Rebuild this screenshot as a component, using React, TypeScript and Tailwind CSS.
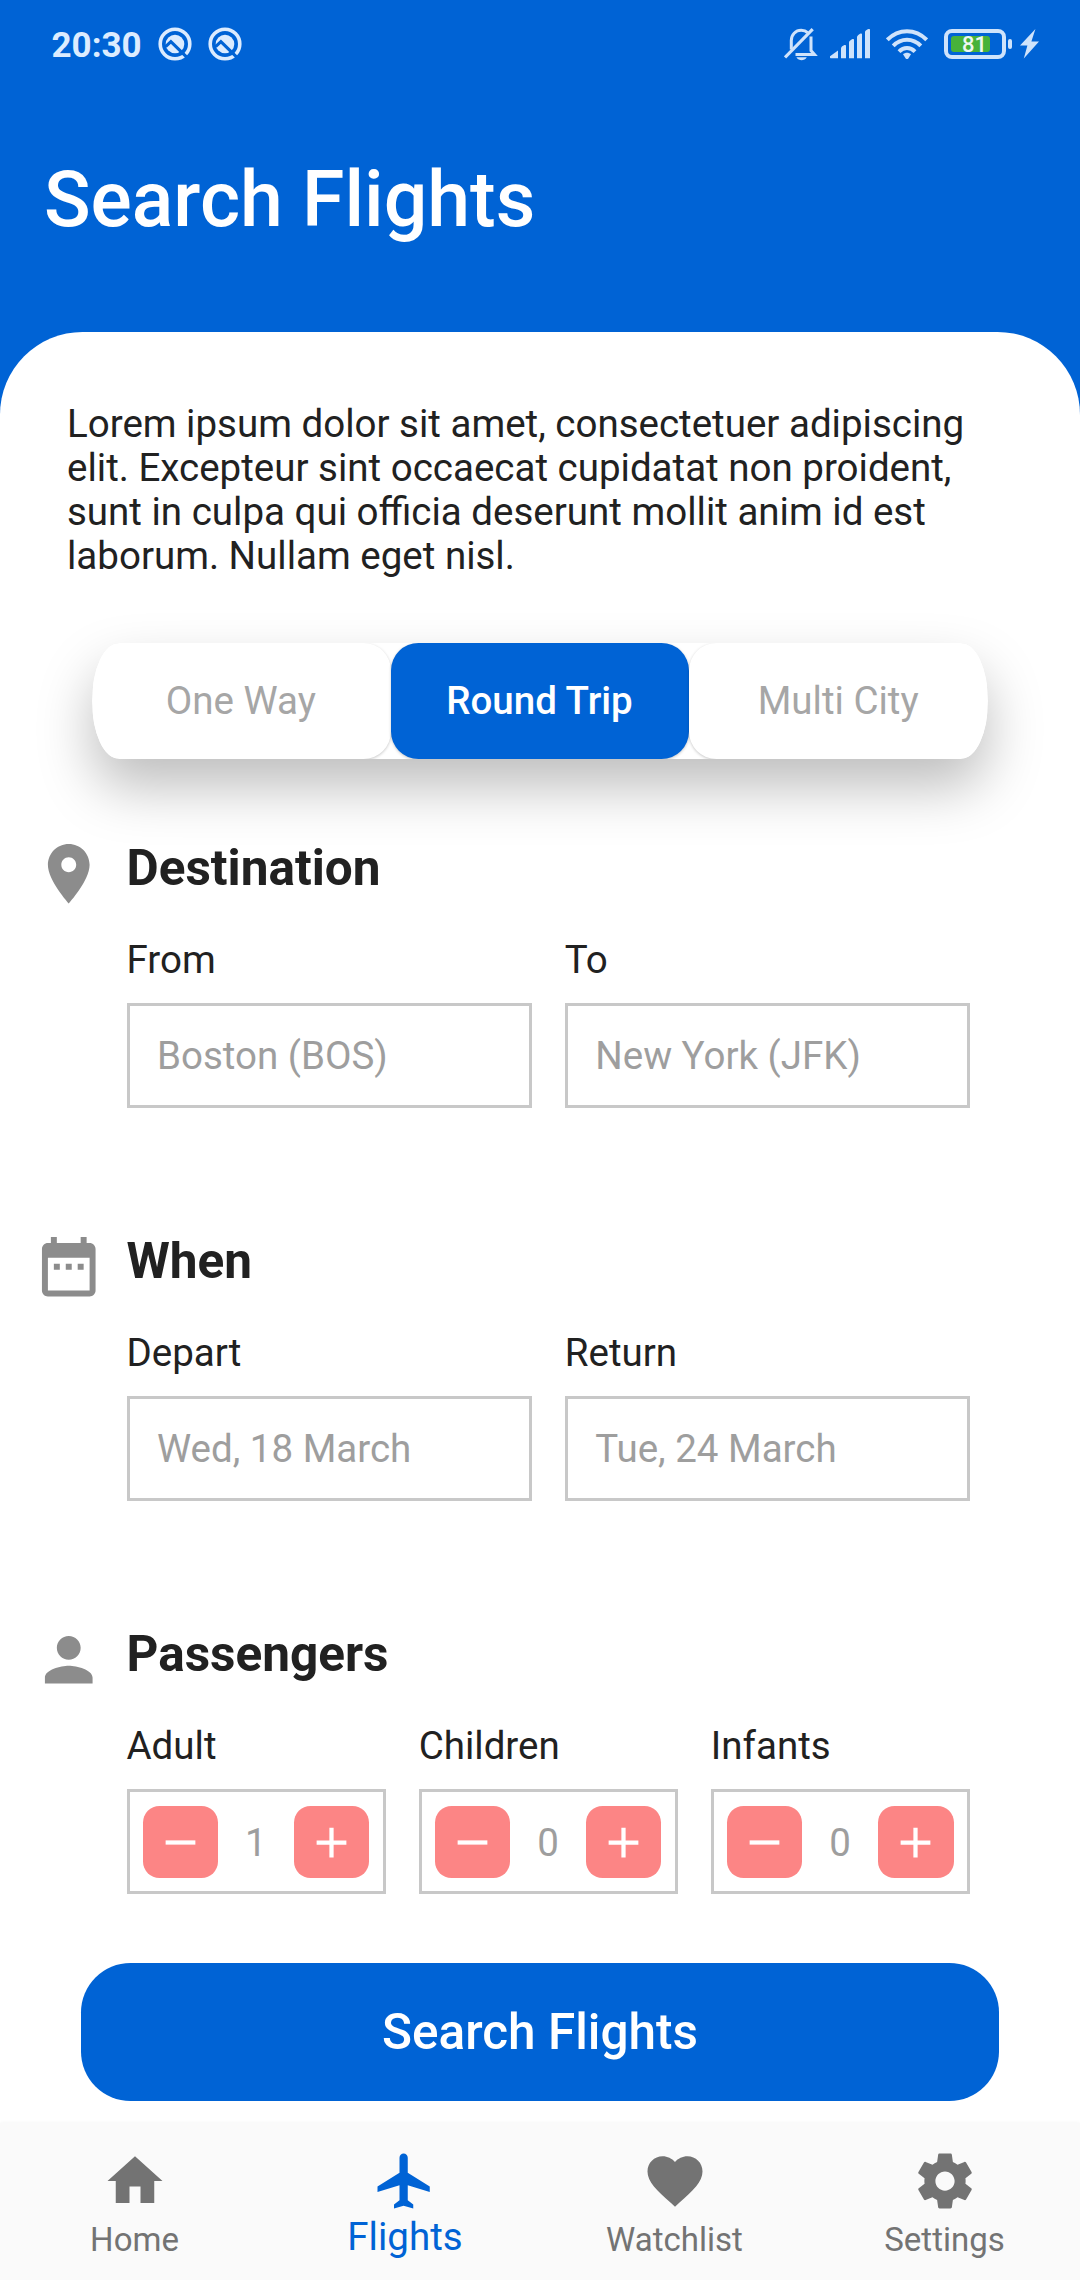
import type { ReactNode } from 'react';

const PATHS = {
  place:
    'M12 2C8.13 2 5 5.13 5 9c0 5.25 7 13 7 13s7-7.75 7-13c0-3.87-3.13-7-7-7zm0 9.5c-1.38 0-2.5-1.12-2.5-2.5s1.12-2.5 2.5-2.5 2.5 1.12 2.5 2.5-1.12 2.5-2.5 2.5z',
  dateRange:
    'M9 11H7v2h2v-2zm4 0h-2v2h2v-2zm4 0h-2v2h2v-2zm2-7h-1V2h-2v2H8V2H6v2H5c-1.11 0-1.99.9-1.99 2L3 20c0 1.1.89 2 2 2h14c1.1 0 2-.9 2-2V6c0-1.1-.9-2-2-2zm0 16H5V9h14v11z',
  person:
    'M12 12c2.21 0 4-1.79 4-4s-1.79-4-4-4-4 1.79-4 4 1.79 4 4 4zm0 2c-2.67 0-8 1.34-8 4v2h16v-2c0-2.66-5.33-4-8-4z',
  home: 'M10 20v-6h4v6h5v-8h3L12 3 2 12h3v8z',
  plane:
    'M21 16v-2l-8-5V3.5c0-.83-.67-1.5-1.5-1.5S10 2.67 10 3.5V9l-8 5v2l8-2.5V19l-2 1.5V22l3.5-1 3.5 1v-1.5L13 19v-5.5l8 2.5z',
  heart:
    'M12 21.35l-1.45-1.32C5.4 15.36 2 12.28 2 8.5 2 5.42 4.42 3 7.5 3c1.74 0 3.41.81 4.5 2.09C13.09 3.81 14.76 3 16.5 3 19.58 3 22 5.42 22 8.5c0 3.78-3.4 6.86-8.55 11.54L12 21.35z',
  settings:
    'M19.43 12.98c.04-.32.07-.64.07-.98s-.03-.66-.07-.98l2.11-1.65c.19-.15.24-.42.12-.64l-2-3.46c-.12-.22-.39-.3-.61-.22l-2.49 1c-.52-.4-1.08-.73-1.69-.98l-.38-2.65C14.46 2.18 14.25 2 14 2h-4c-.25 0-.46.18-.49.42l-.38 2.65c-.61.25-1.17.59-1.69.98l-2.49-1c-.23-.09-.49 0-.61.22l-2 3.46c-.13.22-.07.49.12.64l2.11 1.65c-.04.32-.07.65-.07.98s.03.66.07.98l-2.11 1.65c-.19.15-.24.42-.12.64l2 3.46c.12.22.39.3.61.22l2.49-1c.52.4 1.08.73 1.69.98l.38 2.65c.03.24.24.42.49.42h4c.25 0 .46-.18.49-.42l.38-2.65c.61-.25 1.17-.59 1.69-.98l2.49 1c.23.09.49 0 .61-.22l2-3.46c.12-.22.07-.49-.12-.64l-2.11-1.65zM12 15.5c-1.93 0-3.5-1.57-3.5-3.5s1.57-3.5 3.5-3.5 3.5 1.57 3.5 3.5-1.57 3.5-3.5 3.5z',
  minus: 'M19 13H5v-2h14v2z',
  plus: 'M19 13h-6v6h-2v-6H5v-2h6V5h2v6h6v2z',
};

function Icon({ name, className }: { name: keyof typeof PATHS; className: string }) {
  return (
    <svg viewBox="0 0 24 24" fill="currentColor" className={`shrink-0 ${className}`}>
      <path d={PATHS[name]} />
    </svg>
  );
}

function QuickIcon() {
  return (
    <svg viewBox="0 0 34 34" className="h-[34px] w-[34px]" fill="none">
      <circle cx="17" cy="17" r="14.8" stroke="currentColor" strokeWidth="3.6" />
      <circle cx="17" cy="17" r="9.3" fill="currentColor" />
      <path d="M7.6 19.6L12.9 14.6L30 31.4" stroke="#0063d5" strokeWidth="3.2" />
    </svg>
  );
}

function StatusBar() {
  return (
    <div className="flex h-[88px] items-center justify-between pl-[51.5px] pr-[41px] text-[#dcecff]">
      <div className="flex items-center">
        <span className="w-[106px] pt-[3px] text-[35px] font-bold leading-[40px]">20:30</span>
        <div className="flex gap-4">
          <QuickIcon />
          <QuickIcon />
        </div>
      </div>
      <div className="flex items-center text-[#cfe3fb]">
        {/* muted bell */}
        <svg viewBox="0 0 34 34" className="mr-[12px] h-[34px] w-[34px]" fill="none" stroke="currentColor" strokeWidth="3">
          <path d="M7.3 22.5V13.5C7.3 7.6 11.6 3.3 17.2 3.3C20 3.3 22 4 23.6 5.6" />
          <path d="M27 9.5V23.6L30.5 27.6H11.5" />
          <path d="M1 30.5L28.7 2.2" strokeWidth="3.2" />
          <path d="M12.4 30.2H22.8C21.5 32.5 19.5 33.2 17.6 33.2S13.7 32.5 12.4 30.2Z" fill="currentColor" stroke="none" />
        </svg>
        {/* signal */}
        <svg viewBox="0 0 40 30" className="mr-[16px] h-[30px] w-[40px]" fill="currentColor">
          <path d="M0 27.3L8 21.6V29.3H1C.4 29.3 0 28.8 0 28.2Z" />
          <path d="M11 19.2C11 17.4 16 14.6 16 16.8V29.3H11Z" />
          <path d="M19 13.4C19 11.6 24 8.6 24 10.8V29.3H19Z" />
          <path d="M27 8C27 6.2 32 3 32 5.2V29.3H27Z" />
          <path d="M35 3C35 1.2 40-1.6 40 1V29.3H35Z" />
        </svg>
        {/* wifi */}
        <svg viewBox="0 0 42 30" className="mr-[16px] h-[30px] w-[42px]" fill="none" stroke="currentColor" strokeWidth="4">
          <path d="M1.3 10.8C12.6-.7 29.4-.7 40.7 10.8" />
          <path d="M7.2 16.8C15.2 8.6 26.8 8.6 34.8 16.8" />
          <path d="M13 22.6C17.8 17.8 24.2 17.8 29 22.6" />
          <path d="M17 25.2C19.4 23.2 22.6 23.2 25 25.2L22.3 29.4C21.6 30.2 20.4 30.2 19.7 29.4Z" fill="currentColor" stroke="none" />
        </svg>
        {/* battery */}
        <div className="flex items-center">
          <div className="relative flex h-[30px] w-[62px] items-center rounded-[8px] border-4 border-current pl-[3px]">
            <div className="h-4 w-[39px] rounded-[3px] bg-[#47b23a]" />
            <span className="absolute left-[14px] top-[-1px] text-[22px] font-medium leading-[26px] text-[#eef7f2]">81</span>
          </div>
          <div className="ml-[2px] h-[10px] w-[4px] rounded-[2px] bg-current" />
        </div>
        <svg viewBox="0 0 19 30" className="ml-[8px] h-[30px] w-[19px]" fill="currentColor">
          <path d="M15.4 0L0 16.4H7.4L3.8 29.6L19 12.4H11.4Z" />
        </svg>
      </div>
    </div>
  );
}

function Segment({ label, active }: { label: string; active?: boolean }) {
  return (
    <button
      className={`flex flex-1 items-center justify-center rounded-[27.5px] pb-[2px] pr-px text-[38.5px] leading-[45px] shadow-[0_1px_3px_rgba(0,0,0,0.22)] ${
        active ? 'bg-[#0063d5] font-medium text-white' : 'bg-white text-[#a6a6a6]'
      }`}
    >
      {label}
    </button>
  );
}

function Section({ icon, title, children }: { icon: keyof typeof PATHS; title: string; children: ReactNode }) {
  return (
    <section className="flex gap-[22px]">
      <Icon name={icon} className="h-[71.5px] w-[71.5px] text-[#8c8c8c]" />
      <div className="w-[843.5px] pt-px">
        <h2 className="text-[49.5px] font-bold leading-[58px]">{title}</h2>
        <div className="mt-10 flex gap-[33px]">{children}</div>
      </div>
    </section>
  );
}

function Field({ label, value }: { label: string; value: string }) {
  return (
    <div className="flex-1">
      <div className="text-[38.5px] leading-[45px]">{label}</div>
      <div className="mt-[21px] flex h-[104.5px] items-center border-[3px] border-[#c8c8c8] pl-[27.5px] text-[38.5px] leading-[45px] text-[#9e9e9e]">
        {value}
      </div>
    </div>
  );
}

function Counter({ label, value }: { label: string; value: number }) {
  return (
    <div className="flex-1">
      <div className="text-[38.5px] leading-[45px]">{label}</div>
      <div className="mt-[21px] flex h-[104.5px] items-center justify-between border-[3px] border-[#c8c8c8] pl-[13px] pr-[13.5px] pt-[2px]">
        <button className="flex h-[72px] w-[75.5px] items-center justify-center rounded-[16.5px] bg-[#fc8585] text-white">
          <Icon name="minus" className="h-[51px] w-[51px]" />
        </button>
        <span className="text-[38.5px] leading-[45px] text-[#9e9e9e]">{value}</span>
        <button className="flex h-[72px] w-[75.5px] items-center justify-center rounded-[16.5px] bg-[#fc8585] text-white">
          <Icon name="plus" className="h-[51px] w-[51px]" />
        </button>
      </div>
    </div>
  );
}

function NavItem({ icon, label, active }: { icon: keyof typeof PATHS; label: string; active?: boolean }) {
  return (
    <a className={`flex flex-1 flex-col items-center pt-[25px] ${active ? 'text-[#0063d5]' : 'text-[#737373]'}`}>
      <Icon name={icon} className="h-[66px] w-[66px]" />
      <span className={active ? 'text-[38.5px] leading-[45px]' : 'pr-px pt-[6px] text-[33px] leading-[39px]'}>{label}</span>
    </a>
  );
}

export default function App() {
  return (
    <div className="flex h-[2280px] w-[1080px] flex-col overflow-hidden bg-[#0063d5] font-['Roboto',sans-serif] text-[#212121]">
      <header className="h-[332px] shrink-0">
        <StatusBar />
        <h1 className="pl-11 pt-[67px] text-[77px] font-medium leading-[90px] text-white">Search Flights</h1>
      </header>

      <main className="flex min-h-0 flex-1 flex-col rounded-t-[82.5px] bg-white pt-[70px]">
        <p className="whitespace-nowrap pl-[67px] text-[38.5px] leading-[44px]">
          Lorem ipsum dolor sit amet, consectetuer adipiscing
          <br />
          elit. Excepteur sint occaecat cupidatat non proident,
          <br />
          sunt in culpa qui officia deserunt mollit anim id est
          <br />
          laborum. Nullam eget nisl.
        </p>

        <div className="mx-[92px] mt-[65px] flex h-[116px] shrink-0 overflow-hidden rounded-[27px/58px] bg-white shadow-[0_28px_55px_rgba(0,0,0,0.26)]">
          <Segment label="One Way" />
          <Segment label="Round Trip" active />
          <Segment label="Multi City" />
        </div>

        <div className="mt-[79px] flex flex-col gap-[123.5px] pl-[33px]">
          <Section icon="place" title="Destination">
            <Field label="From" value="Boston (BOS)" />
            <Field label="To" value="New York (JFK)" />
          </Section>
          <Section icon="dateRange" title="When">
            <Field label="Depart" value="Wed, 18 March" />
            <Field label="Return" value="Tue, 24 March" />
          </Section>
          <Section icon="person" title="Passengers">
            <Counter label="Adult" value={1} />
            <Counter label="Children" value={0} />
            <Counter label="Infants" value={0} />
          </Section>
        </div>

        <button className="mx-[81px] mt-[69px] h-[138px] shrink-0 rounded-[49.5px] bg-[#0063d5] text-[49.5px] font-medium leading-[58px] text-white">
          Search Flights
        </button>
      </main>

      <nav className="flex h-[157px] shrink-0 bg-[#fafafa] shadow-[0_-1px_3px_rgba(0,0,0,0.03)]">
        <NavItem icon="home" label="Home" />
        <NavItem icon="plane" label="Flights" active />
        <NavItem icon="heart" label="Watchlist" />
        <NavItem icon="settings" label="Settings" />
      </nav>
    </div>
  );
}
